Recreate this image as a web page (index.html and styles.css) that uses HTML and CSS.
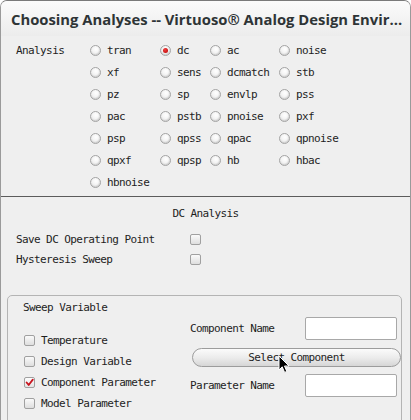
FILE: index.html
```html
<!DOCTYPE html>
<html>
<head>
<meta charset="utf-8">
<link rel="stylesheet" href="styles.css">
</head>
<body>
<div class="window">
  <header class="titlebar">
    <h1 class="title">Choosing Analyses -- Virtuoso® Analog Design Envir...</h1>
  </header>
  <main class="content">
    <section class="analysis">
      <div class="label">Analysis</div>
      <label class="opt"><span class="radio"></span>tran</label>
      <label class="opt"><span class="radio on"></span>dc</label>
      <label class="opt"><span class="radio"></span>ac</label>
      <label class="opt"><span class="radio"></span>noise</label>
      <div class="label"></div>
      <label class="opt"><span class="radio"></span>xf</label>
      <label class="opt"><span class="radio"></span>sens</label>
      <label class="opt"><span class="radio"></span>dcmatch</label>
      <label class="opt"><span class="radio"></span>stb</label>
      <div class="label"></div>
      <label class="opt"><span class="radio"></span>pz</label>
      <label class="opt"><span class="radio"></span>sp</label>
      <label class="opt"><span class="radio"></span>envlp</label>
      <label class="opt"><span class="radio"></span>pss</label>
      <div class="label"></div>
      <label class="opt"><span class="radio"></span>pac</label>
      <label class="opt"><span class="radio"></span>pstb</label>
      <label class="opt"><span class="radio"></span>pnoise</label>
      <label class="opt"><span class="radio"></span>pxf</label>
      <div class="label"></div>
      <label class="opt"><span class="radio"></span>psp</label>
      <label class="opt"><span class="radio"></span>qpss</label>
      <label class="opt"><span class="radio"></span>qpac</label>
      <label class="opt"><span class="radio"></span>qpnoise</label>
      <div class="label"></div>
      <label class="opt"><span class="radio"></span>qpxf</label>
      <label class="opt"><span class="radio"></span>qpsp</label>
      <label class="opt"><span class="radio"></span>hb</label>
      <label class="opt"><span class="radio"></span>hbac</label>
      <div class="label"></div>
      <label class="opt"><span class="radio"></span>hbnoise</label>
    </section>
    <hr class="sep">
    <section class="dc">
      <div class="dc-heading">DC Analysis</div>
      <div class="dc-row"><span class="dc-label">Save DC Operating Point</span><span class="check"></span></div>
      <div class="dc-row"><span class="dc-label">Hysteresis Sweep</span><span class="check"></span></div>
    </section>
    <section class="group">
      <div class="group-title">Sweep Variable</div>
      <div class="group-body">
        <div class="sweep-list">
          <label class="sweep-item"><span class="check"></span>Temperature</label>
          <label class="sweep-item"><span class="check"></span>Design Variable</label>
          <label class="sweep-item"><span class="check on"><svg viewBox="0 0 11 11" width="11" height="11"><path d="M2 5.5 L4.5 8.5 L9.5 2" fill="none" stroke="#c8141e" stroke-width="2.2" stroke-linecap="round" stroke-linejoin="round"/></svg></span>Component Parameter</label>
          <label class="sweep-item"><span class="check"></span>Model Parameter</label>
        </div>
        <div class="sweep-form">
          <div class="field"><span class="field-label">Component Name</span><span class="input"></span></div>
          <div class="button">Select Component</div>
          <div class="field"><span class="field-label">Parameter Name</span><span class="input"></span></div>
          <svg class="cursor" width="12" height="19" viewBox="0 0 12 19"><path d="M1 1 L1 15 L4.2 11.8 L6.6 17.4 L8.8 16.4 L6.5 11 L11 11 Z" fill="#000" stroke="#fff" stroke-width="1" stroke-linejoin="round"/></svg>
        </div>
      </div>
    </section>
  </main>
</div>
</body>
</html>
```

FILE: styles.css
```css
* { box-sizing: border-box; }
html, body { margin: 0; padding: 0; background: #ffffff; }
body { width: 411px; height: 420px; overflow: hidden; }

.window {
  width: 411px;
  height: 420px;
  background: #efefef;
  border-left: 1px solid #9a9a9a;
  border-right: 1px solid #9a9a9a;
  border-top: 1px solid #7a7a7a;
  border-radius: 7px 7px 0 0;
  overflow: hidden;
  font-family: "DejaVu Sans Mono", monospace;
  font-size: 11px;
  letter-spacing: -0.6px;
  color: #1e1e1e;
}

.titlebar {
  height: 35px;
  background: linear-gradient(#fbfbfb, #ececec);
  display: flex;
  align-items: center;
  padding-left: 10px;
}
.title {
  margin: 0;
  font-family: "Open Sans", sans-serif;
  font-weight: 700;
  font-size: 14.8px;
  letter-spacing: 0;
  color: #2e3436;
  white-space: nowrap;
}

.content { position: relative; }

.analysis {
  display: grid;
  grid-template-columns: 74px 70px 50px 69px 1fr;
  grid-auto-rows: 22px;
  padding: 3px 0 0 15px;
}
.label, .opt {
  display: flex;
  align-items: center;
  white-space: nowrap;
}
.opt { gap: 6px; }

.radio {
  width: 11px;
  height: 11px;
  flex: none;
  border-radius: 50%;
  border: 1px solid #a4a4a4;
  background: radial-gradient(circle at 55% 35%, #ffffff 0, #f4f4f4 45%, #d2d2d2 100%);
  box-shadow: inset -1px -1px 1px rgba(0,0,0,0.08);
  position: relative;
}
.radio.on::after {
  content: "";
  position: absolute;
  left: 2px;
  top: 2px;
  width: 5px;
  height: 5px;
  border-radius: 50%;
  background: radial-gradient(circle at 40% 35%, #f04040, #b80000);
}

.sep {
  margin: 3px 0 0 0;
  border: 0;
  border-top: 1px solid #5c5c5c;
  height: 0;
}

.dc { padding: 7px 0 0 15px; }
.dc-heading {
  line-height: 20px;
  text-align: center;
  padding-right: 15px;
  margin-bottom: 5px;
}
.dc-row {
  display: flex;
  align-items: center;
  height: 20px;
}
.dc-label { width: 174px; }

.check {
  width: 11px;
  height: 11px;
  flex: none;
  border: 1px solid #a0a0a0;
  border-radius: 2px;
  background: linear-gradient(#fafafa, #dedede);
  display: inline-flex;
  align-items: center;
  justify-content: center;
}
.check.on { background: linear-gradient(#fdfdfd, #e4e4e4); }
.check svg { display: block; }

.group {
  margin: 26px 8px 0 6px;
  height: 140px;
  border: 1px solid #b4b4b4;
  border-radius: 5px;
  padding: 3px 0 0 15px;
}
.group-title { line-height: 18px; }

.group-body { display: flex; }
.sweep-list {
  width: 167px;
  padding-top: 13px;
  padding-left: 1px;
}
.sweep-item {
  display: flex;
  align-items: center;
  gap: 6px;
  height: 21px;
  white-space: nowrap;
}

.sweep-form {
  position: relative;
  width: 211px;
  display: flex;
  flex-direction: column;
}
.field {
  display: flex;
  align-items: center;
  height: 23px;
}
.field-label { flex: 1; white-space: nowrap; }
.input {
  width: 92px;
  height: 23px;
  margin-right: 4px;
  background: #ffffff;
  border: 1px solid #a8a8a8;
  border-radius: 2px;
}
.button {
  margin: 8px 0 7px 2px;
  height: 19px;
  border: 1px solid #9c9c9c;
  border-radius: 10px;
  background: linear-gradient(#fbfbfb 0%, #ececec 50%, #d6d6d6 100%);
  text-align: center;
  line-height: 17px;
}
.cursor {
  position: absolute;
  left: 88px;
  top: 38px;
}
```
